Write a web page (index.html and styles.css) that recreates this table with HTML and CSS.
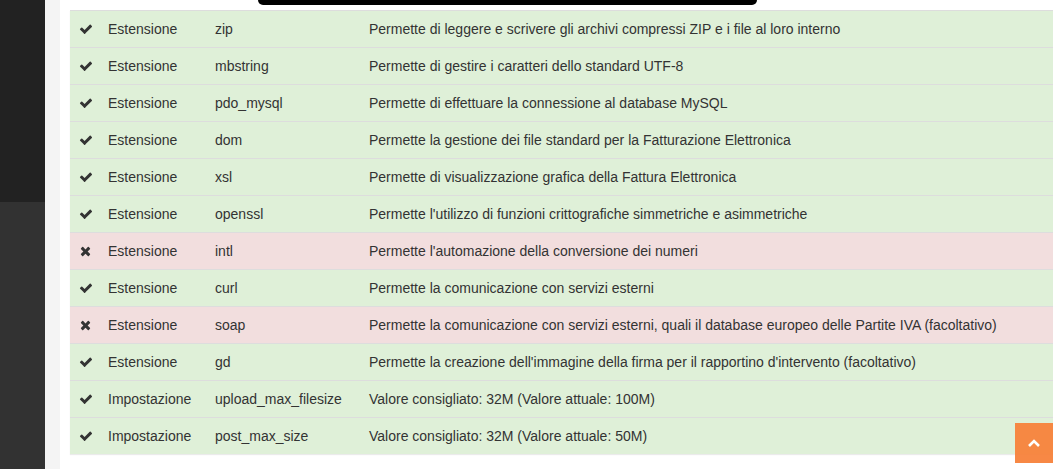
FILE: index.html
```html
<!DOCTYPE html>
<html lang="it">
<head>
<meta charset="utf-8">
<title>Requisiti</title>
<link rel="stylesheet" href="styles.css">
</head>
<body>
<div class="layout">
  <aside class="sidebar">
    <div class="sidebar-top"></div>
    <div class="sidebar-bottom"></div>
  </aside>
  <div class="gutter"></div>
  <main class="content">
    <div class="notch"></div>
    <table class="req-table">
      <colgroup>
        <col class="c-icon"><col class="c-type"><col class="c-name"><col class="c-desc">
      </colgroup>
      <tbody>
        <tr class="ok"><td><svg class="ico" viewBox="0 0 1792 1792"><path d="M1671 566q0 40-28 68l-724 724-136 136q-28 28-68 28t-68-28l-136-136-362-362q-28-28-28-68t28-68l136-136q28-28 68-28t68 28l294 295 656-657q28-28 68-28t68 28l136 136q28 28 28 68z"/></svg></td><td>Estensione</td><td>zip</td><td>Permette di leggere e scrivere gli archivi compressi ZIP e i file al loro interno</td></tr>
        <tr class="ok"><td><svg class="ico" viewBox="0 0 1792 1792"><path d="M1671 566q0 40-28 68l-724 724-136 136q-28 28-68 28t-68-28l-136-136-362-362q-28-28-28-68t28-68l136-136q28-28 68-28t68 28l294 295 656-657q28-28 68-28t68 28l136 136q28 28 28 68z"/></svg></td><td>Estensione</td><td>mbstring</td><td>Permette di gestire i caratteri dello standard UTF-8</td></tr>
        <tr class="ok"><td><svg class="ico" viewBox="0 0 1792 1792"><path d="M1671 566q0 40-28 68l-724 724-136 136q-28 28-68 28t-68-28l-136-136-362-362q-28-28-28-68t28-68l136-136q28-28 68-28t68 28l294 295 656-657q28-28 68-28t68 28l136 136q28 28 28 68z"/></svg></td><td>Estensione</td><td>pdo_mysql</td><td>Permette di effettuare la connessione al database MySQL</td></tr>
        <tr class="ok"><td><svg class="ico" viewBox="0 0 1792 1792"><path d="M1671 566q0 40-28 68l-724 724-136 136q-28 28-68 28t-68-28l-136-136-362-362q-28-28-28-68t28-68l136-136q28-28 68-28t68 28l294 295 656-657q28-28 68-28t68 28l136 136q28 28 28 68z"/></svg></td><td>Estensione</td><td>dom</td><td>Permette la gestione dei file standard per la Fatturazione Elettronica</td></tr>
        <tr class="ok"><td><svg class="ico" viewBox="0 0 1792 1792"><path d="M1671 566q0 40-28 68l-724 724-136 136q-28 28-68 28t-68-28l-136-136-362-362q-28-28-28-68t28-68l136-136q28-28 68-28t68 28l294 295 656-657q28-28 68-28t68 28l136 136q28 28 28 68z"/></svg></td><td>Estensione</td><td>xsl</td><td>Permette di visualizzazione grafica della Fattura Elettronica</td></tr>
        <tr class="ok"><td><svg class="ico" viewBox="0 0 1792 1792"><path d="M1671 566q0 40-28 68l-724 724-136 136q-28 28-68 28t-68-28l-136-136-362-362q-28-28-28-68t28-68l136-136q28-28 68-28t68 28l294 295 656-657q28-28 68-28t68 28l136 136q28 28 28 68z"/></svg></td><td>Estensione</td><td>openssl</td><td>Permette l'utilizzo di funzioni crittografiche simmetriche e asimmetriche</td></tr>
        <tr class="ko"><td><svg class="ico ico-x" viewBox="0 0 1408 1792"><path d="M1298 1322q0 40-28 68l-136 136q-28 28-68 28t-68-28l-294-294-294 294q-28 28-68 28t-68-28l-136-136q-28-28-28-68t28-68l294-294-294-294q-28-28-28-68t28-68l136-136q28-28 68-28t68 28l294 294 294-294q28-28 68-28t68 28l136 136q28 28 28 68t-28 68l-294 294 294 294q28 28 28 68z"/></svg></td><td>Estensione</td><td>intl</td><td>Permette l'automazione della conversione dei numeri</td></tr>
        <tr class="ok"><td><svg class="ico" viewBox="0 0 1792 1792"><path d="M1671 566q0 40-28 68l-724 724-136 136q-28 28-68 28t-68-28l-136-136-362-362q-28-28-28-68t28-68l136-136q28-28 68-28t68 28l294 295 656-657q28-28 68-28t68 28l136 136q28 28 28 68z"/></svg></td><td>Estensione</td><td>curl</td><td>Permette la comunicazione con servizi esterni</td></tr>
        <tr class="ko"><td><svg class="ico ico-x" viewBox="0 0 1408 1792"><path d="M1298 1322q0 40-28 68l-136 136q-28 28-68 28t-68-28l-294-294-294 294q-28 28-68 28t-68-28l-136-136q-28-28-28-68t28-68l294-294-294-294q-28-28-28-68t28-68l136-136q28-28 68-28t68 28l294 294 294-294q28-28 68-28t68 28l136 136q28 28 28 68t-28 68l-294 294 294 294q28 28 28 68z"/></svg></td><td>Estensione</td><td>soap</td><td>Permette la comunicazione con servizi esterni, quali il database europeo delle Partite IVA (facoltativo)</td></tr>
        <tr class="ok"><td><svg class="ico" viewBox="0 0 1792 1792"><path d="M1671 566q0 40-28 68l-724 724-136 136q-28 28-68 28t-68-28l-136-136-362-362q-28-28-28-68t28-68l136-136q28-28 68-28t68 28l294 295 656-657q28-28 68-28t68 28l136 136q28 28 28 68z"/></svg></td><td>Estensione</td><td>gd</td><td>Permette la creazione dell'immagine della firma per il rapportino d'intervento (facoltativo)</td></tr>
        <tr class="ok"><td><svg class="ico" viewBox="0 0 1792 1792"><path d="M1671 566q0 40-28 68l-724 724-136 136q-28 28-68 28t-68-28l-136-136-362-362q-28-28-28-68t28-68l136-136q28-28 68-28t68 28l294 295 656-657q28-28 68-28t68 28l136 136q28 28 28 68z"/></svg></td><td>Impostazione</td><td>upload_max_filesize</td><td>Valore consigliato: 32M (Valore attuale: 100M)</td></tr>
        <tr class="ok"><td><svg class="ico" viewBox="0 0 1792 1792"><path d="M1671 566q0 40-28 68l-724 724-136 136q-28 28-68 28t-68-28l-136-136-362-362q-28-28-28-68t28-68l136-136q28-28 68-28t68 28l294 295 656-657q28-28 68-28t68 28l136 136q28 28 28 68z"/></svg></td><td>Impostazione</td><td>post_max_size</td><td>Valore consigliato: 32M (Valore attuale: 50M)</td></tr>
      </tbody>
    </table>
  </main>
</div>
<a class="to-top" href="#" aria-label="Torna su"><svg viewBox="0 0 12 8" class="chev"><path d="M1 7 L6 2 L11 7" fill="none" stroke="#fff" stroke-width="2.6"/></svg></a>
</body>
</html>
```

FILE: styles.css
```css
html, body {
  margin: 0;
  padding: 0;
  height: 100%;
  overflow: hidden;
}
body {
  font-family: "Liberation Sans", Arial, sans-serif;
  font-size: 14px;
  line-height: 20px;
  color: #333;
  background: #fff;
}
.layout {
  display: flex;
  height: 100%;
  width: 100%;
}
.sidebar {
  width: 45px;
  flex: 0 0 45px;
  display: flex;
  flex-direction: column;
}
.sidebar-top {
  height: 202px;
  background: #222;
}
.sidebar-bottom {
  flex: 1;
  background: #323232;
}
.gutter {
  width: 15px;
  flex: 0 0 15px;
  background: #f4f4f4;
}
.content {
  flex: 1;
  min-width: 0;
  position: relative;
  padding: 10px 0 0 10px;
  background: #fff;
}
.notch {
  position: absolute;
  top: 0;
  left: 198px;
  width: 499px;
  height: 5px;
  background: #000;
  border-radius: 0 0 9px 9px;
}
.req-table {
  border-collapse: collapse;
  width: 100%;
  table-layout: fixed;
  box-shadow: 0 1px 1px rgba(0,0,0,0.08);
}
.c-icon { width: 30px; }
.c-type { width: 107px; }
.c-name { width: 154px; }
.c-desc { width: auto; }
.req-table td {
  padding: 8px;
  border-top: 1px solid #ddd;
  vertical-align: top;
  white-space: nowrap;
}
.req-table tr.ok td { background: #dff0d8; }
.req-table tr.ko td { background: #f2dede; }
.ico {
  display: block;
  width: 14px;
  height: 14px;
  margin: 3px 0 0 1px;
  fill: #333;
}
.ico-x {
  width: 11px;
  margin-left: 2px;
}
.to-top {
  position: fixed;
  right: -2px;
  top: 423px;
  width: 40px;
  height: 40px;
  background: #f7823c;
  opacity: 0.95;
  display: flex;
  align-items: center;
  justify-content: center;
}
.chev {
  width: 12px;
  height: 8px;
  margin-left: -2px;
}
```
